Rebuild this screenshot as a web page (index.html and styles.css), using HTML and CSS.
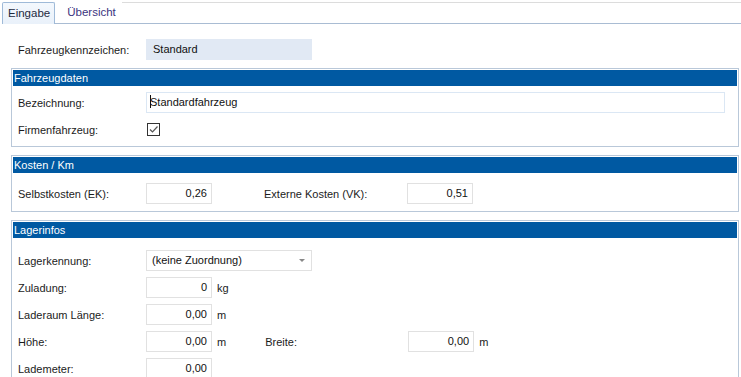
FILE: index.html
```
<!DOCTYPE html>
<html lang="de">
<head>
<meta charset="utf-8">
<title>Fahrzeug</title>
<link rel="stylesheet" href="styles.css">
</head>
<body>
<div class="tabs">
  <div class="tab active">Eingabe</div>
  <div class="tab">Übersicht</div>
  <div class="tab-fill"></div>
</div>
<div class="content">
  <div class="row first">
    <span class="lbl">Fahrzeugkennzeichen:</span>
    <div class="field readonly w-std">Standard</div>
  </div>

  <section class="group">
    <h2 class="ghead">Fahrzeugdaten</h2>
    <div class="gbody g1">
      <div class="row">
        <span class="lbl">Bezeichnung:</span>
        <div class="field text wide"><span class="caret"></span>Standardfahrzeug</div>
      </div>
      <div class="row">
        <span class="lbl">Firmenfahrzeug:</span>
        <span class="check"><svg width="11" height="11" viewBox="0 0 11 11"><path d="M2 5.5 L4.5 8 L9.5 2.5" fill="none" stroke="#555" stroke-width="1.2"/></svg></span>
      </div>
    </div>
  </section>

  <section class="group">
    <h2 class="ghead">Kosten / Km</h2>
    <div class="gbody g2">
      <div class="row">
        <span class="lbl">Selbstkosten (EK):</span>
        <div class="field num">0,26</div>
        <span class="lbl2">Externe Kosten (VK):</span>
        <div class="field num">0,51</div>
      </div>
    </div>
  </section>

  <section class="group">
    <h2 class="ghead">Lagerinfos</h2>
    <div class="gbody g3">
      <div class="row">
        <span class="lbl">Lagerkennung:</span>
        <div class="field combo w-std">(keine Zuordnung)<span class="arrow"></span></div>
      </div>
      <div class="row">
        <span class="lbl">Zuladung:</span>
        <div class="field num">0</div>
        <span class="unit">kg</span>
      </div>
      <div class="row">
        <span class="lbl">Laderaum Länge:</span>
        <div class="field num">0,00</div>
        <span class="unit">m</span>
      </div>
      <div class="row">
        <span class="lbl">Höhe:</span>
        <div class="field num">0,00</div>
        <span class="unit">m</span>
        <span class="lbl2 after-unit">Breite:</span>
        <div class="field num">0,00</div>
        <span class="unit">m</span>
      </div>
      <div class="row">
        <span class="lbl">Lademeter:</span>
        <div class="field num">0,00</div>
      </div>
    </div>
  </section>
</div>
</body>
</html>
```

FILE: styles.css
```
html, body {
  margin: 0;
  padding: 0;
  background: #ffffff;
  overflow: hidden;
}
body {
  font-family: "Liberation Sans", Arial, sans-serif;
  font-size: 11px;
  color: #1b1b1b;
  width: 741px;
  height: 377px;
}
.tabs {
  display: flex;
  align-items: flex-end;
  height: 24px;
  box-sizing: border-box;
  padding-top: 2px;
}
.tab {
  height: 22px;
  line-height: 21px;
  box-sizing: border-box;
  padding: 0 6px;
  border-bottom: 1px solid #a9bcd3;
  color: #3b3480;
  font-size: 11.5px;
}
.tab.active {
  margin-left: 2px;
  border: 1px solid #9fbad8;
  border-bottom: none;
  border-radius: 2px 2px 0 0;
  background: linear-gradient(#f4f8fd, #e9f1fa);
  color: #1e2a3e;
  padding: 0 4px 0 5px;
}
.tab.active + .tab {
  padding-left: 12px;
}
.tab-fill {
  flex: 1;
  height: 22px;
  box-sizing: border-box;
  border-top: 1px solid #dcdcdc;
  border-bottom: 1px solid #a9bcd3;
}
.content {
  padding: 15px 2px 0 11px;
}
.row {
  display: flex;
  align-items: center;
  height: 21px;
}
.row.first {
  padding-left: 7px;
  margin-bottom: 8px;
}
.lbl {
  width: 128px;
  flex: none;
}
.field {
  height: 21px;
  box-sizing: border-box;
  line-height: 19px;
  padding: 0 4px;
  border: 1px solid #e1e1e1;
  background: #fff;
  color: #111;
  white-space: nowrap;
  flex: none;
}
.field.readonly {
  border-color: #e1e9f4;
  background: #e1e9f4;
  padding-left: 6px;
}
.w-std {
  width: 166px;
}
.field.text {
  border-color: #dbe7f4;
  padding-left: 3px;
}
.field.wide {
  width: 579px;
}
.caret {
  display: inline-block;
  width: 1px;
  height: 13px;
  background: #111;
  vertical-align: -2px;
  margin-right: -1px;
}
.field.num {
  width: 66px;
  text-align: right;
}
.field.combo {
  position: relative;
  padding-left: 5px;
}
.arrow {
  position: absolute;
  right: 6px;
  top: 8px;
  width: 0;
  height: 0;
  border-left: 3px solid transparent;
  border-right: 3px solid transparent;
  border-top: 3px solid #888;
}
.unit {
  margin-left: 5px;
  flex: none;
}
.lbl2 {
  width: 143px;
  padding-left: 52px;
  flex: none;
}
.after-unit {
  padding-left: 39px;
}
.check {
  width: 13px;
  height: 13px;
  box-sizing: border-box;
  border: 1px solid #333;
  margin-left: 1px;
  display: flex;
  align-items: center;
  justify-content: center;
  flex: none;
}
.group {
  border: 1px solid #b9c8d9;
  padding: 1px;
  margin-bottom: 8px;
}
.ghead {
  margin: 0;
  height: 16px;
  line-height: 16px;
  background: #0059a2;
  color: #fff;
  font-size: 11px;
  font-weight: normal;
  padding-left: 1px;
}
.gbody {
  display: flex;
  flex-direction: column;
  gap: 6px;
  padding: 6px 0 5px 5px;
}
.g2 {
  padding-top: 10px;
  padding-bottom: 6px;
}
.g3 {
  padding-top: 12px;
}
```
